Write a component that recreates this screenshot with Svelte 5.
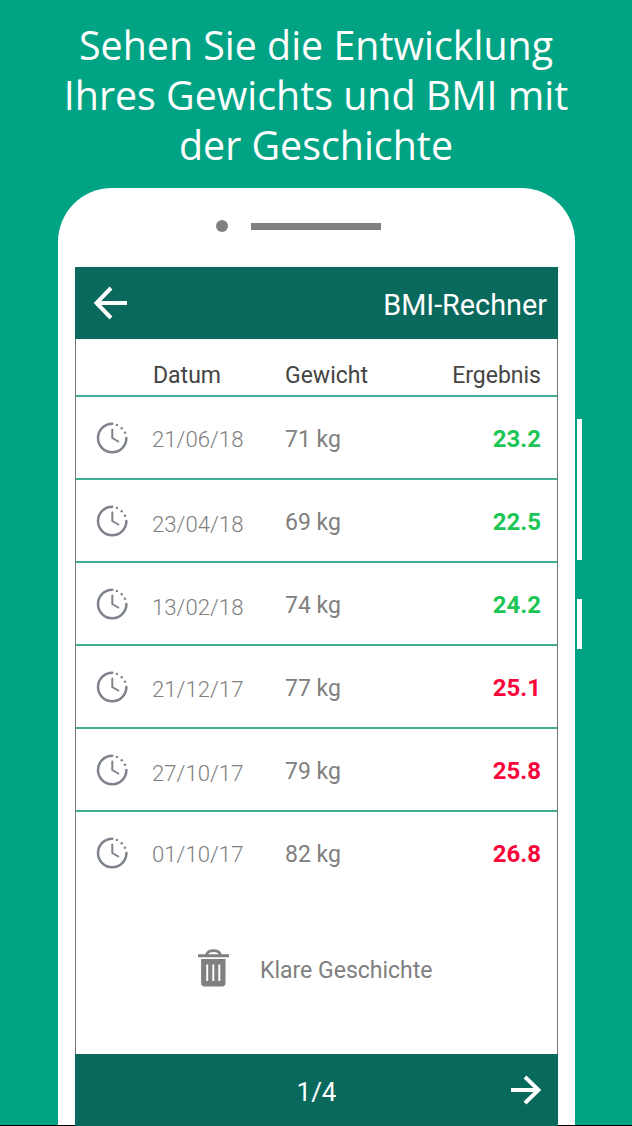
<script>
	const entries = [
		{ date: "21/06/18", weight: 71, bmi: 23.2, drop: 0 },
		{ date: "23/04/18", weight: 69, bmi: 22.5, drop: 2 },
		{ date: "13/02/18", weight: 74, bmi: 24.2, drop: 2 },
		{ date: "21/12/17", weight: 77, bmi: 25.1, drop: 1 },
		{ date: "27/10/17", weight: 79, bmi: 25.8, drop: 2 },
		{ date: "01/10/17", weight: 82, bmi: 26.8, drop: 0 }
	];

	const limit = 25;
</script>

<main>
	<h1>Sehen Sie die Entwicklung<br />Ihres Gewichts und BMI mit<br />der Geschichte</h1>

	<div class="phone">
		<i class="key volume"></i>
		<i class="key power"></i>
		<div class="speaker">
			<i class="dot"></i>
			<i class="slot"></i>
		</div>

		<div class="screen">
			<header>
				<svg width="34" height="34" viewBox="0 0 34 34">
					<path d="M33 17H3M17 2 2.5 17 17 32" />
				</svg>
				<span>BMI-Rechner</span>
			</header>

			<div class="row head">
				<span></span>
				<span>Datum</span>
				<span>Gewicht</span>
				<span class="right">Ergebnis</span>
			</div>

			{#each entries as { date, weight, bmi, drop }}
				<div class="row entry">
					<svg class="clock" width="32" height="32" viewBox="0 0 32 32">
						<path class="ring" d="M16.2 1.8A14.2 14.2 0 1 0 30.4 16" />
						<path class="hands" d="M16.3 7.5V16L22.3 19.5" />
						<circle cx="20.9" cy="2.9" r="1.2" />
						<circle cx="25.7" cy="6.2" r="1.2" />
						<circle cx="29" cy="10.7" r="1.2" />
					</svg>
					<span class="date" style="padding-top: {drop * 2}px">{date}</span>
					<span class="weight">{weight} kg</span>
					<b class="right" class:high={bmi >= limit}>{bmi}</b>
				</div>
			{/each}

			<div class="clear">
				<svg width="31" height="38" viewBox="0 0 32 39">
					<path
						d="M0 5.3H7.5C8.5 2 11.5.2 16 .2S23.5 2 24.5 5.3H32V8.3H0ZM10.5 5.3H21.5C20.5 3.7 18.7 2.9 16 2.9S11.5 3.7 10.5 5.3Z"
						fill-rule="evenodd"
					/>
					<path d="M3.2 10.2H28.4V35Q28.4 38.5 25 38.5H6.6Q3.2 38.5 3.2 35Z" />
					<path class="ribs" d="M9.5 16V33M15.8 16V33M22 16V33" />
				</svg>
				<span>Klare Geschichte</span>
			</div>

			<footer>
				<span>1/4</span>
				<svg width="30" height="30" viewBox="0 0 30 30">
					<path d="M0 15H27M14 2 27.5 15 14 28" />
				</svg>
			</footer>
		</div>
	</div>
</main>

<style>
	:global(body) {
		background: #00a383;
	}

	main {
		height: 1126px;
		box-sizing: border-box;
		padding-top: 20px;
		overflow: hidden;
		background: linear-gradient(#000, #000) bottom / 100% 1px no-repeat;
		font-family: Roboto, sans-serif;
	}

	h1 {
		height: 168px;
		margin: 0;
		font-family: "Open Sans", "Noto Sans", sans-serif;
		font-size: 41px;
		font-weight: 400;
		line-height: 50px;
		text-align: center;
		color: #fff;
		white-space: nowrap;
		transform: translateY(-1px) scaleX(0.96);
	}

	.phone {
		position: relative;
		width: 517px;
		height: 937px;
		margin-left: 58px;
		border-radius: 54px 54px 0 0;
		background: #fff;
	}

	.key {
		position: absolute;
		left: 519px;
		width: 5px;
		background: #fff;
	}

	.volume {
		top: 231px;
		height: 141px;
	}

	.power {
		top: 411px;
		height: 50px;
	}

	.speaker {
		display: flex;
		align-items: center;
		gap: 23px;
		height: 77px;
		padding: 0 0 2px 158px;
	}

	.dot {
		width: 12px;
		height: 12px;
		margin-bottom: 1px;
		border-radius: 50%;
		background: #808080;
	}

	.slot {
		width: 130px;
		height: 7px;
		background: #808080;
	}

	.screen {
		width: 481px;
		margin-left: 17px;
		border: solid #747474;
		border-width: 0 1px;
		color: #808080;
		font-size: 23px;
	}

	header,
	footer {
		display: flex;
		align-items: center;
		justify-content: space-between;
		height: 72px;
		margin: 0 -1px;
		box-sizing: border-box;
		background: #09695d;
		color: #fff;
	}

	header {
		padding: 3px 11px 0 19px;
		font-size: 28.8px;
	}

	header svg {
		margin-top: -3px;
	}

	header path,
	footer path {
		fill: none;
		stroke: #fff;
		stroke-width: 4;
	}

	.row {
		display: grid;
		grid-template-columns: 77px 132px 1fr 100px;
		align-items: center;
		box-sizing: border-box;
		height: 83px;
		padding-right: 16px;
		border-bottom: 2px solid #3fae93;
	}

	.head {
		height: 58px;
		padding-top: 17px;
		color: #444;
	}

	.weight {
		margin-top: 4px;
	}

	.entry:nth-last-of-type(2) {
		border-color: transparent;
	}

	.right {
		text-align: right;
	}

	.clock {
		margin-left: 20px;
		fill: #7d828b;
	}

	.clock path {
		fill: none;
		stroke: #7d828b;
		stroke-linecap: round;
	}

	.ring {
		stroke-width: 2.5;
	}

	.hands {
		stroke-width: 2;
	}

	.date {
		margin: 2px 0 0 -1px;
		font-size: 22.2px;
		font-weight: 300;
	}

	b {
		margin-top: 2px;
		color: #1cc655;
		font-size: 24px;
		font-weight: 700;
	}

	b.high {
		color: #f8063a;
	}

	.clear {
		display: flex;
		align-items: center;
		gap: 31px;
		height: 159px;
		box-sizing: border-box;
		padding: 0 0 11px 122px;
		fill: #808080;
	}

	.clear svg {
		margin-bottom: 3px;
	}

	.clear span {
		padding-top: 2px;
	}

	.ribs {
		stroke: #fff;
		stroke-width: 2;
	}

	footer {
		display: grid;
		grid-template-columns: 1fr auto 1fr;
		padding-right: 17px;
		font-size: 26px;
	}

	footer span {
		grid-column: 2;
		padding: 4px 0 0 17px;
	}

	footer svg {
		justify-self: end;
	}
</style>
